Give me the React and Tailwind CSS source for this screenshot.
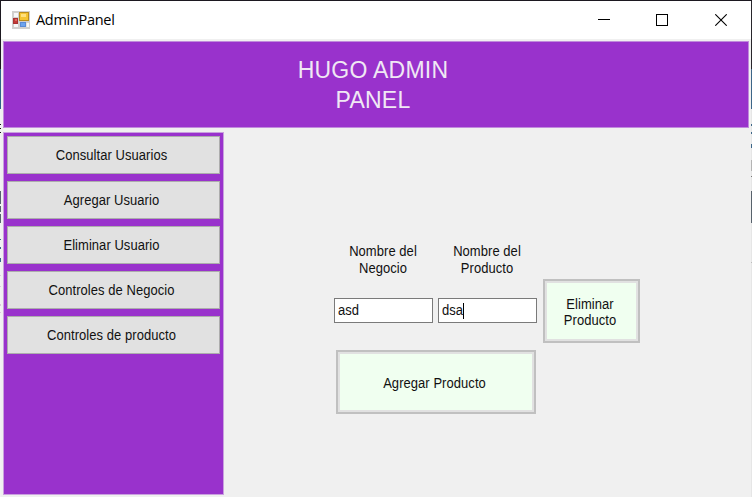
const ms = "font-['Liberation_Sans',Arial,sans-serif]";

function Label({ children, className = "" }) {
  return (
    <span className={`block scale-y-[1.12] text-center text-[13px] leading-[14.5px] tracking-[0.05px] text-[#111] ${className}`}>
      {children}
    </span>
  );
}

function AppIcon() {
  return (
    <svg width="18" height="18" viewBox="0 0 18 18" className="block">
      <rect width="18" height="18" fill="#d2d0ce" />
      <rect x="2" y="2" width="4" height="4" fill="#f8f8f8" />
      <rect x="2" y="13" width="4" height="3" fill="#f8f8f8" />
      <rect x="14.5" y="12" width="2.5" height="4" fill="#f8f8f8" />
      <rect x="7.5" y="1.5" width="9" height="8" fill="#f5c433" stroke="#b98d1e" />
      <rect x="9" y="3" width="5" height="3" fill="#ffe07e" />
      <rect x="1.5" y="7.5" width="4" height="5" fill="#c43a36" stroke="#a33" />
      <rect x="3" y="8" width="2" height="2" fill="#de6a60" />
      <rect x="8.5" y="11.5" width="5" height="4" fill="#6da4ef" stroke="#5b8bd6" />
    </svg>
  );
}

function TitleBar() {
  return (
    <header className="flex h-[38px] shrink-0 items-center justify-between bg-white pl-[11px]">
      <div className="flex items-center gap-[6px]">
        <AppIcon />
        <span className="font-['Open_Sans','Noto_Sans',sans-serif] text-[14.5px] leading-5 tracking-[-0.3px] text-black">
          AdminPanel
        </span>
      </div>
      <div className="flex">
        <span className="grid h-[38px] w-[58px] place-items-center">
          <svg width="12" height="12" shapeRendering="crispEdges"><path d="M0 5.5H12" stroke="#000" /></svg>
        </span>
        <span className="grid h-[38px] w-[58px] place-items-center">
          <svg width="12" height="12" shapeRendering="crispEdges"><rect x=".5" y=".5" width="11" height="11" fill="none" stroke="#000" /></svg>
        </span>
        <span className="grid h-[38px] w-[60px] place-items-center">
          <svg width="12" height="12"><path d="M.3.3L11.7 11.7M11.7.3L.3 11.7" stroke="#000" strokeWidth="1.1" /></svg>
        </span>
      </div>
    </header>
  );
}

const menu = ["Consultar Usuarios", "Agregar Usuario", "Eliminar Usuario", "Controles de Negocio", "Controles de producto"];

function Sidebar() {
  return (
    <nav className="flex h-[363px] w-[221px] flex-col gap-[7px] border border-[#c9a0de] bg-[#9932cc] px-[3px] pt-[3px]">
      {menu.map((m) => (
        <button key={m} className="flex h-[38px] w-[213px] items-center justify-center border border-[#adadad] bg-[#e1e1e1] pr-[4px] pt-[2px]">
          <Label>{m}</Label>
        </button>
      ))}
    </nav>
  );
}

function Field({ lines, value, caret }) {
  return (
    <label className="flex w-[99px] flex-col">
      <Label className="mr-px mt-px h-[31px]">{lines[0]}<br />{lines[1]}</Label>
      <span className="mt-[21px] flex h-[25px] items-center border border-[#7a7a7a] bg-white pl-[3px] pt-px">
        <Label>{value}</Label>
        {caret && <span className="h-[16px] w-px bg-black" />}
      </span>
    </label>
  );
}

function ActionButton({ children, className }) {
  return (
    <button className={`flex items-center justify-center border-2 border-[#c0c0c0] bg-[#e1e1e1] p-[2px] ${className}`}>
      <span className="flex h-full w-full items-center justify-center bg-[#f0fff0] pr-[3px] pt-[2px]">{children}</span>
    </button>
  );
}

/* Slivers of the windows behind the frame, visible along its two sides. */
function LeftEdge() {
  return (
    <svg className="absolute left-0 top-0" width="1" height="497" shapeRendering="crispEdges">
      <path d="M.5 0V68" stroke="#1c1820" />
      <path d="M.5 68V108" stroke="#2f6488" />
      <path d="M.5 108V497" stroke="#f2f2f2" />
      <path d="M.5 123v1M.5 127v1M.5 131v1" stroke="#111" />
      <path d="M.5 190v13M.5 205v6M.5 213v9" stroke="#56616d" />
      <path d="M.5 238v1M.5 246v2M.5 257v4" stroke="#36658c" />
      <path d="M.5 274v1M.5 285v1M.5 303v2M.5 311v1" stroke="#dcc4dc" />
    </svg>
  );
}

function RightEdge() {
  return (
    <svg className="absolute right-0 top-0" width="1" height="497" shapeRendering="crispEdges">
      <path d="M.5 0V68" stroke="#28262c" />
      <path d="M.5 68V108" stroke="#3d6688" />
      <path d="M.5 108V497" stroke="#e6e6e6" />
      <path d="M.5 123v2M.5 131v2M.5 143v4" stroke="#3d6688" />
      <path d="M.5 159v11" stroke="#b4b4b4" />
      <path d="M.5 175v1" stroke="#777" />
      <path d="M.5 190v32" stroke="#58626c" />
      <path d="M.5 261v1" stroke="#bbb" />
    </svg>
  );
}

export default function App() {
  return (
    <div className={`relative flex h-[497px] w-[752px] flex-col overflow-hidden border-t border-t-[#1c1820] bg-[#f0f0f0] px-px ${ms}`}>
      <TitleBar />
      <div className="mx-[2px] mt-[2px] flex h-[87px] shrink-0 items-center justify-center border border-[#c08bdc] bg-[#9932cc] pr-[6px]">
        <h1 className="text-center text-[23px] leading-[30px] tracking-[0.25px] text-[#f0e8f4]">HUGO ADMIN<br />PANEL</h1>
      </div>
      <div className="mt-[4px] flex pl-[2px]">
        <Sidebar />
        <main className="pl-[110px] pt-[113px]">
          <div className="flex gap-[5px]">
            <Field lines={["Nombre del", "Negocio"]} value="asd" />
            <Field lines={["Nombre del", "Producto"]} value="dsa" caret />
            <ActionButton className="ml-px mt-[34px] h-[64px] w-[97px]"><Label>Eliminar<br />Producto</Label></ActionButton>
          </div>
          <ActionButton className="ml-[2px] mt-[7px] h-[64px] w-[200px]"><Label className="pt-px">Agregar Producto</Label></ActionButton>
        </main>
      </div>
      <LeftEdge />
      <RightEdge />
    </div>
  );
}
